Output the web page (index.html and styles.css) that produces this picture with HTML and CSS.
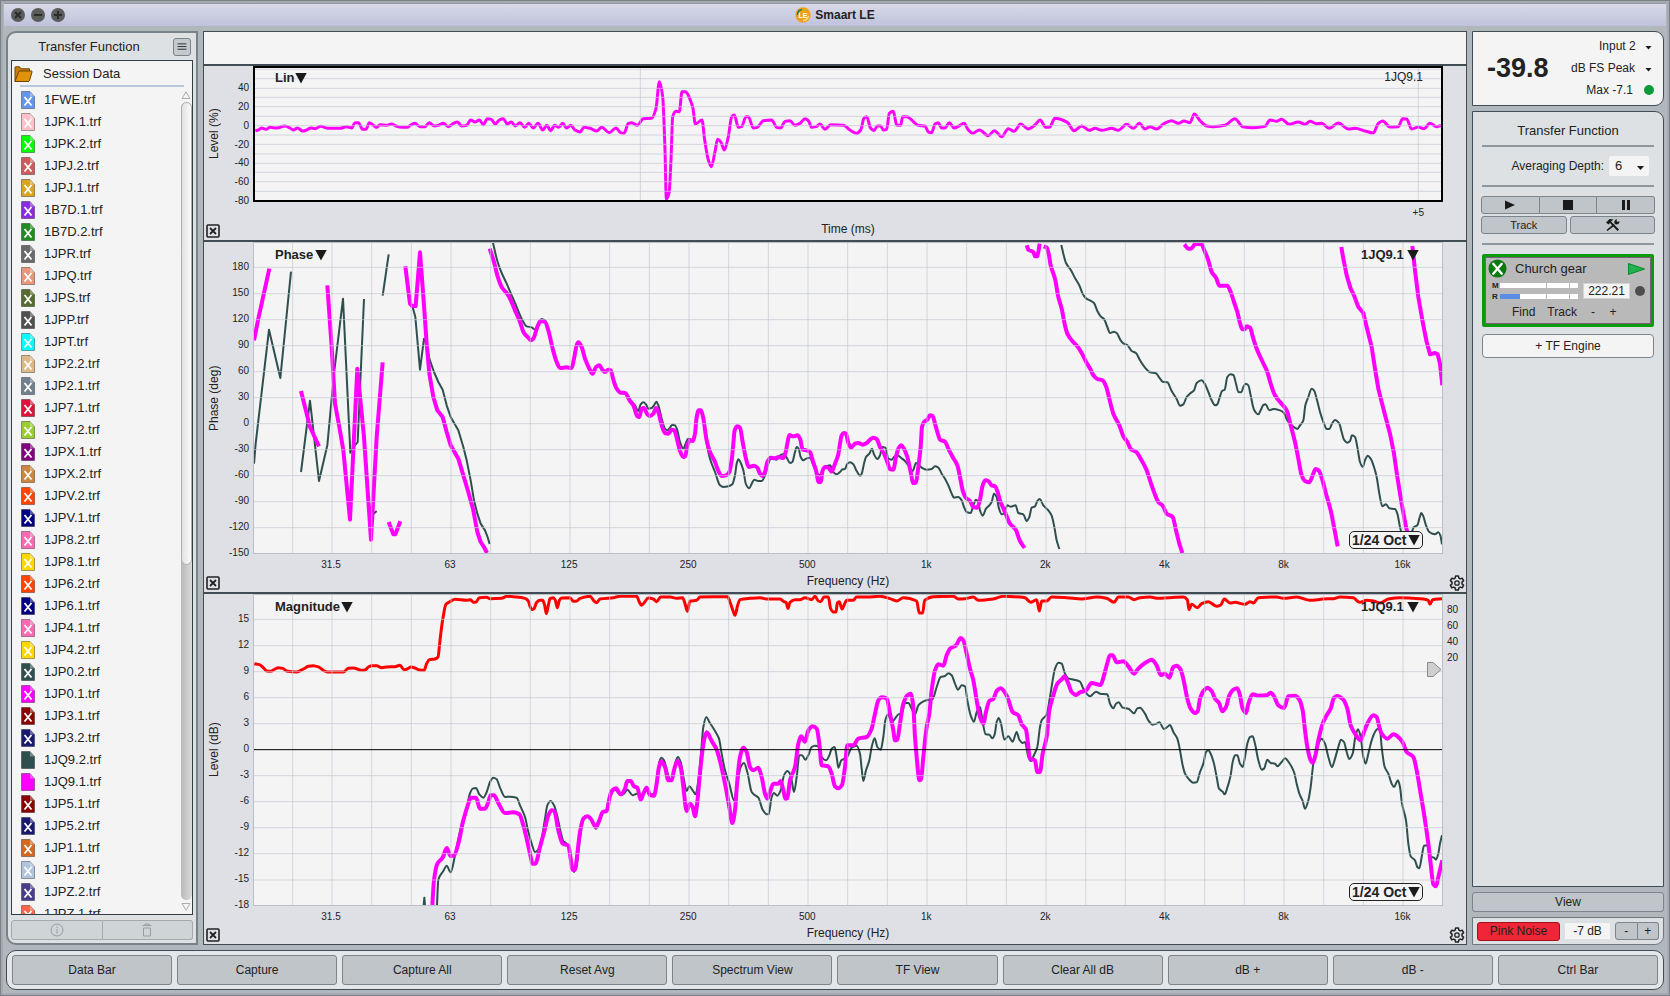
FILE: index.html
```html
<!DOCTYPE html>
<html lang="en">
<head>
<meta charset="utf-8">
<title>Smaart LE</title>
<link rel="stylesheet" href="styles.css">
</head>
<body>
<svg class="defs" aria-hidden="true">
  <symbol id="file" viewBox="0 0 14 18">
    <path d="M.5.5H9L13.5 5.5V17.5H.5Z" fill="currentColor" stroke="#000" stroke-opacity=".35"/>
    <path d="M9 .5V5.5H13.5Z" fill="#fff" fill-opacity=".35"/>
  </symbol>
  <symbol id="file-x" viewBox="0 0 14 18">
    <use href="#file"/>
    <path d="M3.5 6 10.5 14.5M10.5 6 3.5 14.5" stroke="#fff" stroke-width="1.8" fill="none"/>
  </symbol>
  <symbol id="close" viewBox="0 0 14 14">
    <rect x="1" y="1" width="12" height="12" rx="1" fill="none" stroke="#222" stroke-width="1.6"/>
    <path d="M4 4 10 10M10 4 4 10" stroke="#222" stroke-width="1.8"/>
  </symbol>
  <symbol id="gear" viewBox="0 0 16 16">
    <path d="M6.6 1h2.800l.5 2.200 1.200.7 2.100-.7 1.400 2.400-1.600 1.500v1.800l1.600 1.500-1.400 2.400-2.100-.7-1.200.7-.5 2.200H6.600l-.5-2.200-1.200-.7-2.100.7-1.400-2.400L3 8.900V7.100L1.400 5.600l1.400-2.400 2.100.7 1.200-.7z" fill="none" stroke="#222" stroke-width="1.500" stroke-linejoin="round"/>
    <circle cx="8" cy="8" r="2.200" fill="none" stroke="#222" stroke-width="1.300"/>
  </symbol>
</svg>

<div class="window">
  <header class="titlebar">
    <div class="lights">
      <button class="light" aria-label="Close"><svg viewBox="0 0 14 14"><path d="M4 4 10 10M10 4 4 10"/></svg></button>
      <button class="light" aria-label="Minimize"><svg viewBox="0 0 14 14"><path d="M3 7H11"/></svg></button>
      <button class="light" aria-label="Zoom"><svg viewBox="0 0 14 14"><path d="M3 7H11M7 3V11"/></svg></button>
    </div>
    <h1 class="app-name">
      <svg class="app-logo" viewBox="0 0 16 16" aria-hidden="true">
        <circle cx="8" cy="8" r="7.700" fill="#f0a020"/>
        <path d="M2.500 8A5.500 5.500 0 0 1 7 2.500" fill="none" stroke="#1c7a4c" stroke-width="1.500"/>
        <path d="M13.500 9A5.500 5.500 0 0 1 8 13.500" fill="none" stroke="#ffd980" stroke-width="1.500"/>
        <text x="8" y="10.500" class="logo-text">LE</text>
      </svg>
      Smaart LE
    </h1>
  </header>

  <div class="workspace">
    <aside class="sidebar">
      <div class="sidebar-head">
        <h2 class="panel-title">Transfer Function</h2>
        <button class="menu-btn" aria-label="Menu"><svg viewBox="0 0 18 18"><path d="M4 5.500H14M4 8.500H14M4 11.500H14"/></svg></button>
      </div>
      <div class="data-box">
        <button class="session">
          <svg class="folder" viewBox="0 0 19 17" aria-hidden="true">
            <path d="M1 15.500V1.500Q1 .8 1.700.8H5.500L7 2.800H15.500V5" fill="#c87f0a" stroke="#6d4200"/>
            <path d="M1 15.500 4.500 6Q4.800 5 6 5H17.500Q18.300 5 18 6L15.500 14.500Q15.200 15.500 14 15.500Z" fill="#e0920c" stroke="#6d4200"/>
          </svg>
          Session Data
        </button>
        <div class="list-area">
          <ul class="trace-list" id="trace-list"></ul>
          <div class="scroll" aria-hidden="true">
            <svg class="scroll-arrow" viewBox="0 0 10 8"><path d="M1 7.500 5 .8 9 7.500Z"/></svg>
            <div class="scroll-track"><div class="scroll-thumb"></div></div>
            <svg class="scroll-arrow" viewBox="0 0 10 8"><path d="M1 .5 5 7.200 9 .5Z"/></svg>
          </div>
        </div>
      </div>
      <div class="sidebar-foot">
        <button class="foot-btn" aria-label="Info" disabled><svg viewBox="0 0 14 14"><circle cx="7" cy="7" r="6"/><path d="M7 6V10.500M7 3.500V5"/></svg></button>
        <button class="foot-btn" aria-label="Delete" disabled><svg viewBox="0 0 14 14"><path d="M2.500 2.500H11.500M5 2V1H9V2M3.500 5H10.500V13H3.500Z"/></svg></button>
      </div>
    </aside>

    <main class="charts">
      <div class="strip"></div>

      <section class="chart chart-impulse">
        <div class="y-title">Level (%)</div>
        <div class="y-ticks y-ticks-impulse">
          <i></i><span>40</span><span>20</span><span>0</span><span>-20</span><span>-40</span><span>-60</span><span>-80</span>
        </div>
        <div class="plot plot-impulse">
          <svg class="traces" viewBox="765 204 3558 396" preserveAspectRatio="none">
            <polyline class="line magenta thin" points="766,392 775,390 785,384 798,388 810,382 830,384 855,378 870,384 880,390 892,384 908,393 920,390 932,384 945,386 962,379 985,385 1020,385 1040,380 1055,384 1065,368 1075,368 1088,388 1098,388 1108,368 1118,374 1130,382 1140,374 1160,376 1175,372 1188,378 1205,382 1222,382 1232,375 1245,370 1260,380 1275,380 1288,368 1302,378 1315,376 1330,370 1345,380 1360,370 1372,366 1385,378 1400,376 1412,360 1425,366 1438,360 1450,374 1462,356 1474,358 1486,372 1498,360 1510,356 1522,372 1534,366 1546,378 1560,368 1574,382 1586,370 1600,384 1614,370 1628,390 1640,376 1652,392 1664,376 1676,382 1688,370 1700,384 1712,376 1725,390 1740,396 1752,382 1770,385 1790,393 1805,382 1828,398 1848,384 1862,398 1872,400 1885,370 1895,368 1912,376 1930,356 1955,355 1968,325 1978,245 1988,290 1995,450 1999,597 2007,580 2013,480 2018,350 2028,334 2038,335 2046,275 2055,275 2078,320 2086,372 2106,360 2114,420 2125,480 2134,500 2145,455 2153,418 2162,425 2173,450 2185,410 2195,350 2203,345 2215,382 2225,380 2238,350 2245,350 2260,384 2272,382 2290,362 2315,360 2330,382 2342,384 2355,364 2370,362 2385,376 2400,370 2415,356 2425,362 2435,382 2448,380 2460,372 2475,388 2492,374 2530,376 2550,390 2570,400 2582,390 2592,355 2600,350 2612,385 2622,392 2632,378 2642,378 2650,390 2660,388 2668,340 2680,334 2690,375 2702,376 2708,350 2720,350 2755,376 2775,378 2785,396 2795,398 2805,372 2815,368 2825,384 2835,384 2848,368 2862,384 2880,376 2892,370 2905,390 2918,400 2938,390 2965,407 2983,392 3005,410 3025,386 3042,394 3062,372 3085,387 3105,375 3120,360 3138,382 3148,382 3165,355 3202,367 3222,392 3245,378 3268,391 3285,385 3305,391 3335,385 3355,391 3380,373 3400,385 3418,370 3435,387 3450,380 3470,387 3490,372 3515,362 3535,370 3552,363 3570,368 3583,342 3600,362 3620,378 3640,380 3675,376 3705,356 3728,380 3760,383 3795,379 3810,360 3830,364 3845,358 3868,373 3895,366 3915,373 3930,364 3950,371 3965,370 3988,385 4015,369 4045,387 4065,385 4095,393 4120,399 4135,370 4148,363 4170,381 4195,380 4208,356 4220,357 4235,387 4255,381 4272,386 4290,370 4310,380 4323,376"/>
            <path class="grid-line" d="M765 208H4323M765 236H4323M765 265H4323M765 292H4323M765 320H4323M765 349H4323M765 377H4323M765 405H4323M765 433H4323M765 462H4323M765 490H4323M765 517H4323M765 545H4323M765 574H4323M1921 204V600M4255 204V600"/>
          </svg>
          <label class="pick pick-type"><select aria-label="Impulse display"><option>Lin</option></select></label>
          <span class="impulse-name">1JQ9.1</span>
        </div>
        <div class="x-ticks x-ticks-impulse"><span>+5</span></div>
        <footer class="chart-foot">
          <button class="icon-btn" aria-label="Close chart"><svg><use href="#close"/></svg></button>
          <span class="x-title">Time (ms)</span>
        </footer>
      </section>

      <section class="chart">
        <div class="y-title">Phase (deg)</div>
        <div class="y-ticks">
          <i></i><span>180</span><span>150</span><span>120</span><span>90</span><span>60</span><span>30</span><span>0</span><span>-30</span><span>-60</span><span>-90</span><span>-120</span><span>-150</span>
        </div>
        <div class="plot">
          <svg class="traces" viewBox="162 38 3564 930" preserveAspectRatio="none">
            <polyline class="line slate" points="162,700 167,640 207,298 241,443 273,124"/>
            <polyline class="line slate" points="303,725 330,511 357,752 382,645 402,430 429,205 451,667 465,645 473,635 492,206"/>
            <polyline class="line slate" points="521,850 530,842"/>
            <polyline class="line slate" points="548,196 566,72"/>
            <polyline class="line slate" points="638,230 646,260 660,418 672,325 680,340 688,385 702,425 715,455 728,478 740,525 752,560 775,600 790,650 800,690 812,750 822,810 832,850 842,880 855,900 862,918 869,941"/>
            <polyline class="line slate" points="879,38 892,92 905,128 920,160 935,195 950,230 965,265 980,288 995,291 1005,298 1015,278 1025,266 1035,270 1045,300 1058,355 1070,395 1080,413 1100,411 1115,413 1122,385 1130,345 1135,336 1145,350 1155,385 1168,415 1178,430 1188,410 1198,405 1207,418 1215,425 1225,418 1232,420 1240,448 1250,475 1262,487 1275,488 1292,510 1305,525 1315,542 1322,522 1330,516 1338,522 1345,535 1355,533 1362,525 1369,514 1376,528 1385,565 1395,595 1402,600 1410,592 1417,583 1425,585 1432,600 1440,635 1450,655 1457,640 1464,625 1472,627 1480,632 1490,570 1498,540 1508,560 1520,640 1530,685 1545,725 1560,765 1570,770 1585,768 1597,762 1605,735 1610,700 1615,687 1622,697 1630,720 1638,762 1648,774 1655,760 1663,748 1675,752 1685,752 1695,735 1705,700 1715,680 1730,688 1740,675 1750,672 1760,682 1770,698 1777,695 1785,665 1790,650 1796,655 1802,680 1810,690 1820,684 1830,682 1840,705 1850,728 1860,735 1870,715 1880,708 1890,705 1900,725 1910,732 1920,725 1928,717 1935,716 1942,700 1950,696 1960,702 1970,722 1980,736 1985,730 1992,700 1998,680 2008,670 2016,655 2022,672 2032,686 2040,675 2047,650 2056,652 2065,685 2075,688 2082,680 2090,674 2105,684 2115,692 2125,705 2138,722 2148,698 2155,702 2165,712 2180,718 2195,716 2205,708 2215,712 2225,730 2235,745 2245,765 2255,790 2262,802 2275,800 2285,810 2292,830 2300,845 2312,848 2320,825 2328,808 2335,815 2340,840 2348,856 2358,835 2368,825 2375,815 2382,790 2390,800 2397,835 2405,852 2412,850 2422,825 2432,829 2447,825 2455,848 2470,852 2480,872 2488,860 2495,832 2505,828 2512,812 2519,806 2530,825 2545,840 2555,856 2563,890 2570,930 2578,956"/>
            <polyline class="line slate" points="2584,44 2590,70 2598,98 2612,118 2625,143 2638,165 2648,190 2658,204 2670,210 2682,218 2692,242 2702,258 2712,266 2722,290 2730,308 2742,304 2750,308 2762,330 2770,339 2782,344 2795,362 2808,368 2820,390 2835,412 2850,426 2868,429 2878,442 2888,454 2902,456 2915,482 2930,506 2940,526 2950,522 2960,500 2972,488 2982,480 2990,458 3005,450 3014,460 3025,485 3035,510 3045,525 3052,522 3060,498 3066,482 3074,478 3082,440 3092,432 3100,434 3108,460 3115,485 3124,486 3130,470 3137,460 3145,465 3152,495 3162,538 3175,552 3182,540 3190,524 3197,522 3208,540 3220,536 3240,540 3252,548 3262,570 3275,585 3292,596 3300,585 3310,570 3316,525 3325,500 3335,475 3342,480 3350,505 3360,545 3372,580 3380,596 3388,596 3396,580 3405,569 3418,580 3425,605 3432,628 3442,637 3450,632 3456,615 3465,620 3472,650 3480,695 3488,710 3495,690 3503,676 3512,685 3522,710 3530,740 3538,790 3547,828 3558,822 3568,834 3585,836 3592,850 3600,890 3604,905 3620,920 3635,905 3642,890 3652,885 3658,865 3664,848 3670,858 3678,885 3688,905 3705,912 3715,906 3721,915 3726,942"/>
            <polyline class="line magenta" points="162,330 175,265 208,115"/>
            <polyline class="line magenta" points="303,482 330,590 357,648"/>
            <polyline class="line magenta" points="382,165 395,350 405,520 418,590 430,660 450,868 472,415 492,620 513,928 530,620 548,396"/>
            <polyline class="line magenta" points="566,875 580,912 586,912 601,873"/>
            <polyline class="line magenta" points="616,108 630,220 636,227 647,227 660,66 672,225 680,340 688,430 700,500 712,540 728,560 740,605 752,645 775,685 790,735 805,785 820,840 832,905 842,935 852,950 861,968"/>
            <polyline class="line magenta" points="869,55 882,95 892,135 905,170 925,195 945,240 960,275 972,308 985,322 992,330 1000,325 1012,290 1022,272 1035,275 1045,300 1058,355 1070,395 1080,413 1100,411 1115,413 1122,385 1130,345 1135,336 1145,350 1155,385 1168,415 1178,430 1188,410 1198,405 1207,418 1215,425 1225,418 1232,420 1240,448 1250,475 1262,487 1275,488 1290,512 1300,525 1312,558 1318,560 1325,535 1332,533 1342,552 1350,557 1360,550 1368,533 1375,545 1385,585 1395,608 1405,610 1415,598 1423,600 1430,622 1440,662 1450,680 1456,677 1462,645 1470,630 1478,632 1485,610 1490,560 1496,540 1503,540 1510,565 1520,630 1530,665 1545,695 1555,722 1565,737 1578,735 1588,725 1595,690 1600,640 1604,600 1612,588 1620,592 1628,635 1638,685 1646,710 1662,706 1672,712 1680,730 1687,737 1695,725 1702,695 1712,682 1725,684 1735,680 1750,683 1757,665 1762,640 1768,614 1780,618 1792,615 1800,625 1808,658 1820,660 1830,665 1838,690 1848,720 1856,755 1862,755 1868,720 1875,710 1885,712 1895,724 1905,700 1915,672 1920,640 1925,615 1932,608 1938,610 1945,638 1953,652 1965,640 1975,638 1988,643 2000,638 2010,628 2020,622 2030,626 2040,650 2052,670 2062,695 2070,717 2080,718 2088,680 2095,655 2104,645 2112,655 2122,680 2132,725 2140,758 2148,756 2155,710 2162,650 2166,590 2172,575 2182,568 2190,555 2198,557 2205,580 2212,605 2220,628 2235,634 2245,655 2258,680 2272,705 2280,740 2288,780 2298,803 2310,812 2320,830 2332,832 2340,808 2348,765 2356,750 2365,752 2375,765 2385,768 2393,785 2400,810 2415,845 2430,880 2447,898 2460,932 2474,953"/>
            <polyline class="line magenta" points="2480,45 2485,58 2500,65 2505,78 2512,78 2516,60 2519,40"/>
            <polyline class="line magenta" points="2531,48 2540,52 2547,75 2552,105 2565,145 2575,200 2585,235 2595,285 2602,310 2615,330 2632,348 2645,368 2660,398 2672,418 2680,435 2692,446 2708,450 2718,468 2728,505 2740,550 2758,585 2770,618 2782,635 2793,657 2808,664 2822,685 2838,715 2850,750 2862,785 2875,815 2888,826 2900,850 2918,860 2928,900 2938,940 2947,968"/>
            <polyline class="line magenta" points="2953,42 2965,55 2973,55 2985,42 3003,40 3015,65 3025,90 3035,125 3048,142 3058,166 3082,166 3092,185 3102,215 3112,245 3120,278 3127,297 3135,296 3140,288 3150,292 3160,325 3170,355 3188,395 3202,425 3212,460 3225,495 3240,515 3260,540 3272,585 3285,635 3295,685 3305,735 3315,752 3328,756 3338,735 3347,716 3356,720 3366,745 3378,790 3392,840 3402,890 3413,948"/>
            <polyline class="line magenta" points="3424,50 3430,85 3440,135 3452,175 3462,195 3475,230 3490,248 3500,290 3515,350 3525,415 3535,475 3545,515 3558,565 3570,610 3582,670 3592,740 3605,820 3618,890 3622,905"/>
            <polyline class="line magenta" points="3637,47 3645,120 3655,200 3668,275 3680,335 3690,372 3705,368 3713,372 3720,400 3727,465"/>
            <path class="grid-line" d="M162 111H3726M162 190H3726M162 268H3726M162 346H3726M162 424H3726M162 502H3726M162 580H3726M162 658H3726M162 736H3726M162 814H3726M162 892H3726"/>
            <path class="grid-line" d="M278 38V968M396 38V968M515 38V968M634 38V968M753 38V968M872 38V968M991 38V968M1110 38V968M1229 38V968M1348 38V968M1467 38V968M1586 38V968M1705 38V968M1824 38V968M1943 38V968M2062 38V968M2181 38V968M2300 38V968M2419 38V968M2538 38V968M2657 38V968M2776 38V968M2895 38V968M3014 38V968M3133 38V968M3252 38V968M3371 38V968M3490 38V968M3609 38V968"/>
          </svg>
          <label class="pick pick-type"><select aria-label="Chart type"><option>Phase</option></select></label>
          <label class="pick pick-trace"><select aria-label="Front trace"><option>1JQ9.1</option></select></label>
          <label class="pick pick-smooth"><select aria-label="Smoothing"><option>1/24 Oct</option></select></label>
        </div>
        <div class="x-ticks">
          <i></i><span>31.5</span><span>63</span><span>125</span><span>250</span><span>500</span><span>1k</span><span>2k</span><span>4k</span><span>8k</span><span>16k</span>
        </div>
        <footer class="chart-foot">
          <button class="icon-btn" aria-label="Close chart"><svg><use href="#close"/></svg></button>
          <span class="x-title">Frequency (Hz)</span>
          <button class="icon-btn gear-btn" aria-label="Chart settings"><svg class="gear"><use href="#gear"/></svg></button>
        </footer>
      </section>

      <section class="chart">
        <div class="y-title">Level (dB)</div>
        <div class="y-ticks">
          <i></i><span>15</span><span>12</span><span>9</span><span>6</span><span>3</span><span>0</span><span>-3</span><span>-6</span><span>-9</span><span>-12</span><span>-15</span><span>-18</span>
        </div>
        <div class="plot">
          <svg class="traces" viewBox="162 44 3564 930" preserveAspectRatio="none">
            <polyline class="line slate" points="671,974 673,952 675,974"/>
            <polyline class="line slate" points="711,974 715,898 730,872 740,856 752,876 765,825 775,775 790,715 800,690 808,645 818,625 828,623 838,642 850,652 860,635 870,605 880,592 890,597 900,622 915,650 930,649 950,652 960,675 975,710 985,755 995,790 1005,815 1015,808 1025,775 1035,715 1042,675 1052,662 1062,675 1072,708 1082,755 1090,782 1100,790 1108,805 1115,855 1122,875 1130,855 1138,790 1148,725 1160,708 1172,715 1188,745 1198,722 1208,694 1220,690 1230,650 1245,628 1262,645 1272,640 1282,628 1298,645 1310,640 1325,645 1338,628 1350,642 1362,640 1372,590 1378,545 1384,532 1392,540 1402,575 1411,600 1420,580 1428,540 1434,530 1442,545 1452,600 1460,632 1468,618 1478,630 1487,642 1495,600 1503,520 1510,440 1519,410 1528,425 1545,452 1557,475 1565,520 1575,570 1588,610 1602,660 1610,625 1622,560 1632,548 1642,575 1655,635 1665,645 1675,652 1688,688 1700,702 1706,702 1715,650 1722,638 1732,646 1742,630 1752,585 1762,572 1772,585 1782,635 1790,590 1798,525 1806,525 1816,538 1825,525 1835,500 1845,496 1858,500 1865,530 1878,540 1888,525 1895,505 1904,500 1910,530 1915,562 1924,540 1940,532 1955,502 1970,496 1980,520 1985,565 1990,602 1998,570 2008,540 2015,500 2024,474 2032,500 2042,508 2050,470 2056,420 2064,402 2075,425 2085,415 2095,402 2105,400 2115,368 2125,368 2135,385 2145,402 2155,375 2165,366 2180,360 2198,356 2210,320 2222,290 2235,287 2245,279 2255,285 2265,310 2274,328 2285,315 2295,318 2302,360 2312,405 2322,424 2330,395 2340,380 2348,425 2357,462 2368,463 2377,474 2384,462 2390,425 2396,413 2403,430 2413,478 2425,468 2438,484 2450,455 2458,478 2468,488 2475,485 2485,530 2492,542 2500,528 2512,500 2520,440 2525,420 2540,402 2550,350 2558,300 2565,265 2575,247 2585,250 2595,280 2605,294 2622,298 2640,304 2650,325 2660,340 2670,348 2680,340 2688,334 2700,340 2722,342 2730,370 2740,384 2748,370 2756,366 2768,382 2785,385 2802,399 2812,384 2820,382 2835,400 2845,420 2858,433 2870,430 2878,426 2892,446 2902,440 2910,434 2920,455 2932,475 2940,510 2948,555 2955,580 2968,598 2980,607 2990,606 3000,575 3010,550 3018,515 3025,510 3032,520 3042,550 3050,590 3057,625 3068,634 3074,642 3082,622 3092,585 3098,545 3105,525 3112,525 3120,550 3128,560 3135,530 3142,490 3150,470 3158,468 3165,490 3175,540 3185,568 3192,565 3202,538 3212,548 3225,550 3232,558 3245,545 3255,534 3268,548 3282,575 3290,610 3298,640 3308,662 3315,685 3325,660 3332,620 3340,550 3350,505 3365,475 3375,490 3385,530 3396,560 3405,535 3415,500 3423,478 3432,485 3440,515 3448,536 3458,520 3466,470 3474,447 3482,470 3490,530 3497,550 3505,520 3515,480 3525,455 3532,446 3540,450 3545,500 3554,560 3565,580 3575,610 3582,620 3590,605 3594,600 3600,620 3606,670 3618,720 3625,790 3632,828 3645,840 3652,860 3658,864 3665,830 3672,796 3682,795 3692,830 3702,832 3708,838 3715,820 3720,790 3726,765"/>
            <polyline class="line magenta" points="697,974 702,900 712,850 728,832 740,803 752,827 762,825 775,790 790,720 805,670 812,652 828,652 840,685 855,685 865,665 872,645 882,645 895,668 915,698 940,696 958,702 970,735 980,775 990,820 998,850 1006,850 1020,800 1035,745 1045,705 1055,690 1063,692 1075,750 1088,790 1105,796 1112,835 1118,868 1125,868 1132,820 1140,755 1150,715 1162,708 1172,715 1188,740 1198,720 1208,695 1220,692 1228,655 1235,632 1248,624 1262,642 1275,625 1282,602 1292,602 1302,618 1312,622 1322,658 1330,640 1340,622 1350,644 1362,646 1370,610 1376,565 1384,543 1395,560 1405,600 1415,600 1422,570 1432,542 1442,560 1450,620 1460,692 1470,670 1478,680 1485,708 1492,665 1498,600 1505,530 1513,475 1520,456 1535,482 1550,508 1562,550 1575,610 1588,680 1597,728 1605,690 1612,600 1620,530 1630,502 1640,515 1650,560 1660,570 1675,562 1685,590 1695,640 1702,655 1710,635 1720,610 1735,610 1742,602 1750,630 1756,655 1762,653 1770,600 1785,560 1795,490 1803,468 1815,484 1825,450 1838,438 1850,445 1858,490 1865,555 1885,558 1895,580 1905,618 1915,624 1926,614 1935,560 1942,495 1960,495 1975,475 2000,470 2015,445 2025,400 2035,360 2045,351 2060,354 2070,400 2080,450 2085,480 2092,478 2100,430 2110,370 2122,345 2132,340 2140,380 2145,470 2150,530 2158,600 2163,598 2170,530 2180,440 2188,400 2195,330 2205,270 2215,252 2230,256 2240,225 2250,205 2268,195 2282,173 2290,180 2300,220 2310,265 2320,300 2330,360 2340,410 2350,430 2358,395 2368,362 2380,356 2390,332 2402,324 2422,350 2438,395 2455,405 2465,432 2478,448 2484,490 2490,535 2505,540 2512,575 2520,575 2528,520 2540,470 2548,390 2560,345 2572,310 2585,297 2593,288 2605,310 2615,335 2628,344 2640,336 2658,330 2675,308 2702,314 2712,285 2722,248 2730,225 2738,225 2750,246 2770,243 2785,258 2802,280 2815,265 2835,248 2855,238 2870,255 2882,284 2895,280 2908,292 2920,260 2930,256 2942,268 2952,305 2962,355 2972,385 2985,398 2993,393 3000,355 3012,330 3022,322 3035,332 3045,355 3057,368 3067,393 3078,380 3088,345 3100,328 3112,324 3120,345 3128,385 3138,398 3145,370 3158,342 3175,346 3200,345 3212,337 3222,348 3235,375 3252,383 3265,348 3285,346 3297,356 3308,390 3315,450 3322,500 3332,540 3338,548 3345,530 3355,480 3368,430 3380,405 3392,385 3402,352 3412,347 3430,358 3442,385 3452,435 3465,460 3482,480 3490,460 3502,430 3520,405 3530,410 3538,440 3545,460 3562,475 3580,462 3600,475 3610,490 3620,515 3640,530 3650,570 3662,640 3675,720 3685,790 3692,850 3700,912 3708,918 3715,890 3722,860 3727,840"/>
            <polyline class="line red" points="163,250 178,253 190,262 200,272 212,273 225,266 235,262 248,264 262,273 290,275 310,266 325,258 340,256 358,261 370,270 382,275 430,275 445,264 460,263 485,270 495,269 505,260 515,256 530,256 545,262 560,260 585,259 600,255 612,268 620,267 632,260 645,263 658,269 672,270 680,250 688,238 705,236 714,230 720,180 727,125 738,72 750,64 765,57 800,60 812,58 820,66 828,65 838,52 860,51 870,55 905,54 920,48 950,50 975,54 985,62 990,78 996,88 1002,85 1010,66 1020,60 1028,60 1034,75 1039,100 1045,75 1050,55 1060,52 1066,60 1072,82 1078,60 1085,53 1110,52 1120,63 1130,62 1140,54 1170,48 1182,62 1190,67 1200,56 1240,52 1260,48 1310,48 1318,65 1324,75 1332,68 1345,53 1360,56 1370,64 1382,50 1410,50 1430,54 1448,52 1455,70 1462,93 1470,62 1490,60 1500,50 1540,49 1583,49 1590,65 1598,88 1605,105 1613,75 1620,58 1650,54 1680,52 1700,56 1740,56 1752,64 1758,66 1764,84 1770,66 1785,58 1800,58 1815,52 1835,58 1845,48 1855,62 1862,64 1872,50 1885,50 1892,85 1900,95 1908,95 1912,68 1918,64 1926,86 1934,70 1940,60 1960,60 1970,50 2000,50 2040,48 2070,55 2090,62 2110,52 2150,62 2158,98 2168,98 2174,60 2200,49 2260,48 2275,56 2295,55 2320,50 2335,60 2380,56 2410,48 2460,50 2475,52 2492,66 2510,58 2518,92 2525,62 2540,62 2555,50 2600,52 2645,56 2690,50 2720,54 2742,66 2755,50 2785,50 2802,58 2820,52 2850,50 2875,54 2905,52 2950,50 2962,58 2967,88 2975,72 2992,82 3005,70 3025,64 3050,78 3062,74 3073,56 3090,68 3105,66 3135,72 3150,64 3160,68 3175,52 3230,50 3250,54 3290,50 3330,60 3370,56 3400,55 3420,50 3460,52 3478,66 3500,60 3520,62 3540,68 3565,56 3600,52 3640,54 3670,56 3685,60 3690,72 3698,58 3726,55"/>
            <path class="grid-line" d="M162 117H3726M162 196H3726M162 274H3726M162 352H3726M162 430H3726M162 586H3726M162 664H3726M162 742H3726M162 820H3726M162 899H3726"/>
            <path class="grid-line" d="M278 44V974M396 44V974M515 44V974M634 44V974M753 44V974M872 44V974M991 44V974M1110 44V974M1229 44V974M1348 44V974M1467 44V974M1586 44V974M1705 44V974M1824 44V974M1943 44V974M2062 44V974M2181 44V974M2300 44V974M2419 44V974M2538 44V974M2657 44V974M2776 44V974M2895 44V974M3014 44V974M3133 44V974M3252 44V974M3371 44V974M3490 44V974M3609 44V974"/>
            <path class="zero-line" d="M162 508H3726"/>
          </svg>
          <label class="pick pick-type"><select aria-label="Chart type"><option>Magnitude</option></select></label>
          <label class="pick pick-trace"><select aria-label="Front trace"><option>1JQ9.1</option></select></label>
          <label class="pick pick-smooth"><select aria-label="Smoothing"><option>1/24 Oct</option></select></label>
          <svg class="threshold" viewBox="0 0 15 15" aria-hidden="true"><path d="M.5.5H6L14 7.500 6 14.500H.5Z"/></svg>
        </div>
        <div class="coherence"><span>80</span><span>60</span><span>40</span><span>20</span></div>
        <div class="x-ticks">
          <i></i><span>31.5</span><span>63</span><span>125</span><span>250</span><span>500</span><span>1k</span><span>2k</span><span>4k</span><span>8k</span><span>16k</span>
        </div>
        <footer class="chart-foot">
          <button class="icon-btn" aria-label="Close chart"><svg><use href="#close"/></svg></button>
          <span class="x-title">Frequency (Hz)</span>
          <button class="icon-btn gear-btn" aria-label="Chart settings"><svg class="gear"><use href="#gear"/></svg></button>
        </footer>
      </section>
    </main>

    <aside class="control">
      <section class="meter">
        <output class="meter-value">-39.8</output>
        <div class="meter-side">
          <label class="mini"><select aria-label="Input"><option>Input 2</option></select></label>
          <label class="mini"><select aria-label="Meter units"><option>dB FS Peak</option></select></label>
          <div class="meter-max">Max -7.1<span class="led"></span></div>
        </div>
      </section>

      <section class="engines">
        <h2 class="panel-title engines-title">Transfer Function</h2>
        <hr class="rule">
        <div class="avg"><label for="avg">Averaging Depth:</label><span class="mini avg-box"><select id="avg"><option>6</option></select></span></div>
        <hr class="rule">
        <div class="transport">
          <div class="joined">
            <button class="btn" aria-label="Play"><svg viewBox="0 0 12 12"><path d="M1 1.500 11 6 1 10.500Z"/></svg></button>
            <button class="btn" aria-label="Stop"><svg viewBox="0 0 12 12"><path d="M1 1H11V11H1Z"/></svg></button>
            <button class="btn" aria-label="Pause"><svg viewBox="0 0 12 12"><path d="M2 1H5V11H2ZM7 1H10V11H7Z"/></svg></button>
          </div>
          <div class="split">
            <button class="btn">Track</button>
            <button class="btn" aria-label="Tools"><svg class="tools" viewBox="0 0 15 14"><path d="M1 4.500 4.500 1 8.500 1.500 6 3.500 14 11.500 12.500 13 5 5 3.500 6.500Z"/><path d="M2.500 13 1.500 12 8.500 6 10 7.200ZM9.500 5.500Q8.500 2 12 1L11.500 3 13 4 14.500 3Q14.500 6.500 11 6.500Z"/></svg></button>
          </div>
        </div>
        <hr class="rule">
        <article class="engine">
          <div class="engine-head">
            <svg class="engine-mark" viewBox="0 0 20 20" aria-hidden="true"><circle cx="10" cy="10" r="9.500" fill="#0c7a12"/><path d="M5.500 5 14.500 15.500M14.500 5 5.500 15.500" stroke="#fff" stroke-width="2.400" stroke-linecap="round"/></svg>
            <h3 class="engine-name">Church gear</h3>
            <button class="engine-play" aria-label="Run"><svg viewBox="0 0 17 12"><path d="M.5.5 16.500 6 .5 11.500Z"/></svg></button>
          </div>
          <div class="engine-mid">
            <div class="levels">
              <span class="ch">M</span><span class="bar"></span>
              <span class="ch">R</span><span class="bar"><span class="fill" style="width:26%"></span></span>
            </div>
            <input class="delay" type="text" value="222.21" aria-label="Delay">
            <span class="dot"></span>
          </div>
          <div class="engine-actions">
            <button class="plain">Find</button><button class="plain">Track</button><button class="plain">-</button><button class="plain">+</button>
          </div>
        </article>
        <button class="add-engine">+ TF Engine</button>
      </section>

      <button class="btn view-btn">View</button>

      <section class="noise">
        <button class="pink">Pink Noise</button>
        <output class="noise-level">-7 dB</output>
        <div class="joined stepper"><button class="btn" aria-label="Lower">-</button><button class="btn" aria-label="Raise">+</button></div>
      </section>
    </aside>
  </div>

  <nav class="command-bar">
    <button class="cmd">Data Bar</button>
    <button class="cmd">Capture</button>
    <button class="cmd">Capture All</button>
    <button class="cmd">Reset Avg</button>
    <button class="cmd">Spectrum View</button>
    <button class="cmd">TF View</button>
    <button class="cmd">Clear All dB</button>
    <button class="cmd">dB +</button>
    <button class="cmd">dB -</button>
    <button class="cmd">Ctrl Bar</button>
  </nav>
</div>
<script src="script.js"></script>
</body>
</html>
```

FILE: styles.css
```css
* { box-sizing: border-box; }

body {
  margin: 0;
  font: 12px/16px "Liberation Sans", Arial, sans-serif;
  color: #222;
  background: #b0b8be;
}

button, select, input {
  font: inherit;
  color: inherit;
  margin: 0;
  padding: 0;
  border: 0;
  background: none;
  border-radius: 0;
}

select { appearance: none; }
h1, h2, h3 { margin: 0; font-weight: normal; }
.defs { display: none; }

.window {
  display: flex;
  flex-direction: column;
  height: 100vh;
  min-height: 640px;
  padding: 2px 2px 5px;
  border: 1px solid #7c8185;
  box-shadow: inset 0 0 0 2px #a3abb0;
  background: #b0b8be;
}

/* Title bar */
.titlebar {
  display: grid;
  grid-template-columns: 1fr auto 1fr;
  align-items: center;
  height: 23px;
  margin: 0 1px;
  padding: 0 7px;
  border-top: 1px solid #9297a5;
  background: linear-gradient(#d8d9e8, #bfc2db);
}
.lights { display: flex; gap: 6px; }
.light {
  width: 14px;
  height: 14px;
  border-radius: 50%;
  background: #5b5c5c;
}
.light svg { display: block; fill: none; stroke: #2c2c2c; stroke-width: 2; }
.app-name {
  display: flex;
  align-items: center;
  gap: 4px;
  font-size: 12px;
  font-weight: bold;
}
.app-logo { width: 16px; height: 16px; }
.logo-text { font-size: 7px; font-weight: bold; fill: #fff; text-anchor: middle; }

.workspace {
  flex: 1;
  min-height: 0;
  display: grid;
  grid-template-columns: 192px minmax(0, 1fr) 192px;
  gap: 5px;
  margin: 5px 3px;
}

/* Data bar */
.sidebar {
  display: flex;
  flex-direction: column;
  min-height: 0;
  padding: 0 3px 3px;
  border: 2px solid #77828a;
  border-radius: 10px 0 0 10px;
  background: #dde1e4;
}
.panel-title { font-size: 13px; line-height: 16px; text-align: center; }
.sidebar-head {
  display: grid;
  grid-template-columns: 1fr 18px;
  align-items: center;
  gap: 6px;
  height: 27px;
  padding: 0 2px 0 0;
}
.menu-btn {
  height: 18px;
  border: 1px solid #78838a;
  border-radius: 3px;
  background: #c3c9cd;
}
.menu-btn svg { display: block; fill: none; stroke: #222; stroke-width: 1; }
.data-box {
  flex: 1;
  min-height: 0;
  display: flex;
  flex-direction: column;
  border: 1px solid #333d44;
  background: #f4f4f4;
}
.session {
  display: flex;
  align-items: center;
  gap: 10px;
  height: 24px;
  flex: none;
  margin-right: 8px;
  padding: 2px 0 0 2px;
  font-size: 13px;
}
.folder { width: 19px; height: 17px; }
.list-area {
  flex: 1;
  min-height: 0;
  position: relative;
  display: flex;
  margin-left: 8px;
}
.list-area::before {
  content: "";
  position: absolute;
  inset: 0 8px auto 0;
  height: 2px;
  background: #b6c7de;
}
.trace-list {
  flex: 1;
  margin: 0;
  padding: 4px 0 0 1px;
  list-style: none;
  overflow: hidden;
}
.trace {
  display: flex;
  align-items: center;
  gap: 9px;
  height: 22px;
  font-size: 13px;
}
.trace svg { width: 14px; height: 18px; }
.scroll {
  display: flex;
  flex-direction: column;
  align-items: center;
  gap: 3px;
  width: 12px;
  padding: 6px 0 3px;
}
.scroll-arrow { width: 10px; height: 8px; flex: none; fill: none; stroke: #adadad; }
.scroll-track {
  flex: 1;
  width: 11px;
  border-radius: 6px;
  background: linear-gradient(90deg, #b9b9b9, #dadada);
}
.scroll-thumb {
  height: 58%;
  border: 1px solid #b0b0b0;
  border-radius: 6px;
  background: linear-gradient(90deg, #e2e2e2, #fafafa);
}
.sidebar-foot { display: flex; margin-top: 5px; }
.foot-btn {
  flex: 1;
  display: grid;
  place-items: center;
  height: 20px;
  border: 1px solid #a3aaae;
  border-radius: 3px 0 0 3px;
  background: #cfd4d7;
}
.foot-btn + .foot-btn { border-left: 0; border-radius: 0 3px 3px 0; }
.foot-btn svg { width: 14px; height: 14px; fill: none; stroke: #979da1; }

/* Charts */
.charts {
  display: flex;
  flex-direction: column;
  min-height: 0;
  border: 1px solid #424c54;
  background: #dfe0e5;
}
.strip { height: 34px; flex: none; border-bottom: 2px solid #424c54; background: #f4f4f4; }
.chart {
  flex: 350 1 0;
  min-height: 0;
  display: grid;
  grid-template-columns: 20px 29px minmax(0, 1fr) 23px;
  grid-template-rows: minmax(0, 1fr) 20px 18px;
}
.chart + .chart { border-top: 2px solid #424c54; flex-basis: 2px; }
.chart-impulse { flex-grow: 174; }
.y-title {
  grid-area: 1 / 1;
  writing-mode: vertical-rl;
  transform: rotate(180deg);
  text-align: center;
  line-height: 20px;
}
.y-ticks {
  grid-area: 1 / 2;
  display: grid;
  grid-template-rows: 12fr repeat(12, 26fr);
  margin-bottom: -12px;
  padding-right: 4px;
  align-items: center;
  text-align: right;
  font-size: 10px;
  line-height: 12px;
}
.y-ticks-impulse { grid-template-rows: 26fr repeat(7, 37fr); margin-bottom: -8px; }
.plot {
  grid-area: 1 / 3;
  position: relative;
  border: 1px solid #bbbec5;
  background: #f4f4f4;
}
.plot-impulse { border: 2px solid #000; }
.traces { display: block; width: 100%; height: 100%; }
.traces * { vector-effect: non-scaling-stroke; fill: none; }
.line { stroke-linejoin: round; }
.slate { stroke: #2f4f4f; stroke-width: 2; }
.magenta { stroke: #f0f; stroke-width: 4; }
.thin { stroke-width: 3; }
.red { stroke: #f00; stroke-width: 3; }
.grid-line { stroke: #c3c8d0; stroke-opacity: .7; }
.zero-line { stroke: #000; }

.pick {
  position: absolute;
  display: flex;
  align-items: center;
  font-size: 13px;
  line-height: 16px;
  font-weight: bold;
}
.pick::after {
  content: "";
  width: 12px;
  height: 11px;
  background: #1a1a1a;
  clip-path: polygon(0 0, 100% 0, 50% 100%);
}
.pick-type { top: 4px; left: 21px; gap: 1px; }
.plot-impulse .pick-type { top: 2px; left: 20px; gap: 0; }
.pick-trace { top: 4px; right: 23px; gap: 3px; }
.pick-smooth {
  right: 19px;
  bottom: 4px;
  gap: 1px;
  padding: 0 2px;
  border: 1px solid #222;
  border-radius: 5px;
  background: #f4f4f4;
  font-size: 14px;
}
.impulse-name { position: absolute; top: 1px; right: 18px; }
.threshold {
  position: absolute;
  top: 67px;
  right: 0;
  width: 15px;
  height: 15px;
  fill: #cfcfcf;
  stroke: #8a8a8a;
}
.coherence {
  grid-area: 1 / 4;
  display: flex;
  flex-direction: column;
  padding: 8px 0 0 4px;
  font-size: 10px;
}
.x-ticks {
  grid-area: 2 / 3;
  display: grid;
  grid-template-columns: 37fr repeat(10, 238fr);
  margin-right: -19px;
  padding-top: 1px;
  align-items: center;
  text-align: center;
  font-size: 10px;
}
.x-ticks-impulse { display: block; margin: 0; padding: 3px 19px 0 0; text-align: right; }
.chart-foot {
  grid-area: 3 / 1 / 4 / 5;
  display: grid;
  grid-template-columns: 49px 1fr 23px;
  align-items: start;
  text-align: center;
}
.x-title { line-height: 14px; }
.icon-btn { justify-self: start; display: flex; padding: 2px 0 0 2px; }
.gear-btn { justify-self: end; padding: 1px 1px 0 0; }
.icon-btn svg { width: 14px; height: 14px; }
.icon-btn .gear { width: 16px; height: 16px; }

/* Control bar */
.control { display: flex; flex-direction: column; gap: 5px; min-height: 0; }
.meter {
  display: grid;
  grid-template-columns: 1fr auto;
  align-items: center;
  height: 75px;
  flex: none;
  padding: 0 9px 2px 14px;
  border: 1px solid #424c54;
  border-radius: 0 9px 9px 0;
  background: #f4f4f4;
}
.meter-value { font-size: 27px; line-height: 30px; font-weight: bold; }
.meter-side { display: flex; flex-direction: column; align-items: flex-end; gap: 6px; }
.mini { display: flex; align-items: center; gap: 9px; font-size: 13px; padding-right: 2px; }
.mini::after {
  content: "";
  width: 7px;
  height: 4px;
  margin-top: 4px;
  background: #1a1a1a;
  clip-path: polygon(0 0, 100% 0, 50% 100%);
}
.meter-side .mini { font-size: 12px; }
.meter-max { display: flex; align-items: center; gap: 11px; }
.led { width: 10px; height: 10px; border-radius: 50%; background: #0a9a3a; }

.engines {
  flex: 1;
  min-height: 0;
  padding: 11px 9px 0;
  border: 1px solid #424c54;
  border-radius: 0 9px 0 0;
  background: #dde1e4;
}
.rule { height: 2px; margin: 0; border: 0; background: #90979c; }
.engines-title { padding-bottom: 6px; }
.avg {
  display: flex;
  align-items: center;
  justify-content: flex-end;
  gap: 5px;
  padding: 9px 5px;
}
.avg-box { width: 40px; height: 20px; padding: 0 5px 0 6px; justify-content: space-between; border-radius: 2px; background: #f4f4f4; }
.transport { display: grid; gap: 2px; margin: 9px -1px; }
.btn {
  flex: 1;
  display: grid;
  place-items: center;
  height: 18px;
  border: 1px solid #7b858b;
  border-radius: 3px;
  background: #bfc5c9;
  font-size: 11px;
}
.btn svg { width: 12px; height: 12px; fill: #1a1a1a; }
.btn .tools { width: 15px; height: 14px; }
.joined { display: flex; }
.joined .btn + .btn { border-left: 0; }
.joined .btn:not(:last-child) { border-top-right-radius: 0; border-bottom-right-radius: 0; }
.joined .btn:not(:first-child) { border-top-left-radius: 0; border-bottom-left-radius: 0; }
.split { display: flex; gap: 3px; }

.engine {
  margin: 9px 0 7px;
  padding: 1px 6px 4px 3px;
  border: 3px solid #0a9a0a;
  border-radius: 2px;
  box-shadow: inset 0 0 0 1px #7a5f7a;
  background: #b9b9b9;
}
.engine-head { display: grid; grid-template-columns: 19px 1fr 17px; align-items: center; gap: 8px; height: 21px; }
.engine-mark { width: 19px; height: 19px; }
.engine-name { font-size: 13px; }
.engine-play { display: flex; }
.engine-play svg { width: 17px; height: 12px; fill: #22b14c; stroke: #0a8a2a; stroke-width: 1; }
.engine-mid { display: grid; grid-template-columns: 1fr 47px 10px; align-items: center; gap: 5px; height: 24px; }
.levels { display: grid; grid-template-columns: 8px 1fr; align-items: center; row-gap: 1px; padding-left: 4px; }
.ch { font-size: 8px; line-height: 10px; font-weight: bold; }
.bar {
  display: flex;
  height: 5px;
  background: linear-gradient(90deg, #fff 59%, #b9b9b9 59% 60%, #fff 60% 89%, #b9b9b9 89% 90%, #fff 90%);
}
.fill { background: #5a8ee6; }
.delay { min-width: 0; width: 47px; height: 16px; border: 1px solid #d4d4d4; background: #f4f4f4; text-align: center; }
.dot { width: 10px; height: 10px; border-radius: 50%; background: #4d4d4d; }
.engine-actions { display: flex; gap: 12px; padding-left: 24px; height: 17px; align-items: flex-end; }
.plain + .plain + .plain { min-width: 8px; }
.add-engine {
  width: 100%;
  height: 24px;
  border: 1px solid #7b858b;
  border-radius: 4px;
  background: #f4f4f4;
}
.view-btn { flex: none; height: 20px; font-size: 12px; }
.noise {
  display: flex;
  align-items: center;
  gap: 5px;
  height: 28px;
  flex: none;
  padding: 0 4px;
  border: 1px solid #6d777e;
  border-radius: 0 0 9px 0;
  background: #dde1e4;
}
.pink { width: 83px; height: 19px; border: 1px solid #a3101c; border-radius: 3px; background: #ee2638; }
.noise-level { flex: 1; height: 16px; text-align: center; background: #f4f4f4; }
.stepper { width: 44px; }
.stepper .btn { font-size: 12px; }

/* Command bar */
.command-bar {
  display: flex;
  gap: 5px;
  margin: 0 3px;
  padding: 4px 5px;
  border: 1px solid #424c54;
  border-radius: 10px;
  background: #e4e7e9;
}
.cmd {
  flex: 1;
  height: 30px;
  border: 1px solid #7b858b;
  border-radius: 3px;
  background: #bfc5c9;
}
```

FILE: script.js
```js
const traces = [
  ["1FWE", "#6495ed"], ["1JPK.1", "#ffc0cb"], ["1JPK.2", "#00ff00"], ["1JPJ.2", "#cd5c5c"],
  ["1JPJ.1", "#daa520"], ["1B7D.1", "#8a2be2"], ["1B7D.2", "#228b22"], ["1JPR", "#696969"],
  ["1JPQ", "#e9967a"], ["1JPS", "#556b2f"], ["1JPP", "#505050"], ["1JPT", "#00ffff"],
  ["1JP2.2", "#deb887"], ["1JP2.1", "#708090"], ["1JP7.1", "#dc143c"], ["1JP7.2", "#9acd32"],
  ["1JPX.1", "#800080"], ["1JPX.2", "#cd853f"], ["1JPV.2", "#ff4500"], ["1JPV.1", "#000080"],
  ["1JP8.2", "#ff69b4"], ["1JP8.1", "#ffd700"], ["1JP6.2", "#ff4500"], ["1JP6.1", "#000080"],
  ["1JP4.1", "#ff69b4"], ["1JP4.2", "#ffd700"], ["1JP0.2", "#2f4f4f"], ["1JP0.1", "#ff00ff"],
  ["1JP3.1", "#8b0000"], ["1JP3.2", "#191970"], ["1JQ9.2", "#2f4f4f"], ["1JQ9.1", "#ff00ff"],
  ["1JP5.1", "#8b0000"], ["1JP5.2", "#191970"], ["1JP1.1", "#d2691e"], ["1JP1.2", "#b0c4de"],
  ["1JPZ.2", "#483d8b"], ["1JPZ.1", "#ff6347"]
];
const visible = new Set(["1JQ9.2", "1JQ9.1"]);

document.getElementById("trace-list").innerHTML = traces.map(([name, color]) => `
  <li><button class="trace">
    <svg style="color:${color}"><use href="#${visible.has(name) ? "file" : "file-x"}"/></svg>${name}.trf
  </button></li>`).join("");

// Long traces are drawn as monotone cubic curves, so peaks are rounded without overshoot.
function smoothPath(p) {
  const slope = p.slice(1).map((q, i) => (q[1] - p[i][1]) / (q[0] - p[i][0]));
  const tangent = p.map((_, i) => {
    const a = slope[i - 1], b = slope[i];
    if (a === undefined) return b;
    if (b === undefined) return a;
    return a * b <= 0 ? 0 : (2 * a * b) / (a + b);
  });
  let d = `M${p[0]}`;
  for (let i = 1; i < p.length; i++) {
    const h = (p[i][0] - p[i - 1][0]) / 3;
    d += `C${p[i - 1][0] + h},${p[i - 1][1] + h * tangent[i - 1]} ${p[i][0] - h},${p[i][1] - h * tangent[i]} ${p[i]}`;
  }
  return d;
}

document.querySelectorAll("polyline.line").forEach(line => {
  const points = line.getAttribute("points").split(" ").map(s => s.split(",").map(Number));
  if (points.length < 30) return;
  const path = document.createElementNS("http://www.w3.org/2000/svg", "path");
  path.setAttribute("class", line.getAttribute("class"));
  path.setAttribute("d", smoothPath(points));
  line.replaceWith(path);
});
```
